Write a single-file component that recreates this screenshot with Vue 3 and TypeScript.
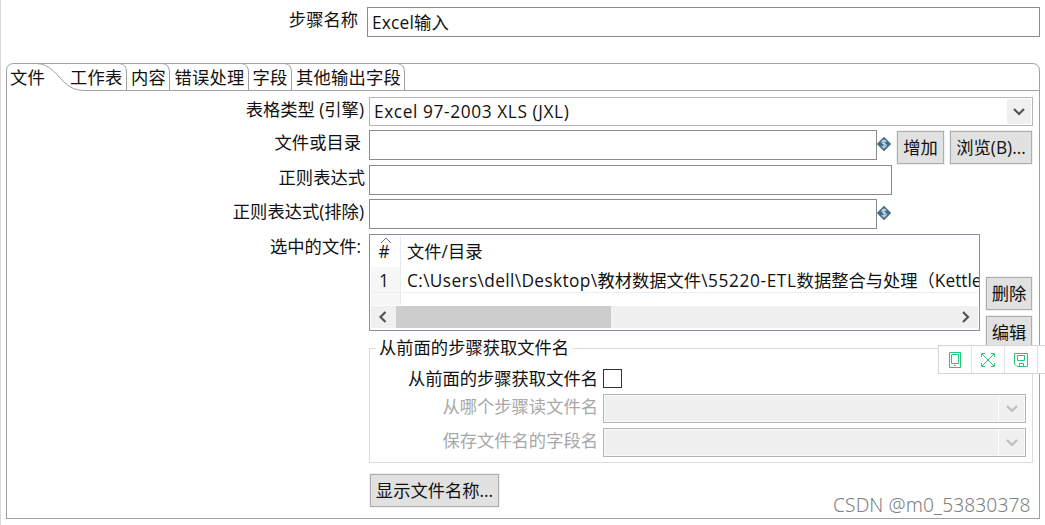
<template>
  <div class="dialog">
    <div class="name-row">
      <label class="name-label">步骤名称</label>
      <div class="input name-input">Excel输入</div>
    </div>

    <div class="folder">
      <div class="tabs">
        <svg class="tab-lines" width="1034" height="29" viewBox="0 0 1034 29" fill="none" stroke="#a0a0a0">
          <path d="M.5 29V8Q.5 .5 8 .5H1026Q1033.5 .5 1033.5 8V29" />
          <path d="M30 .5C45 .5 51 13 59 20Q67 27.500 78 27.500H1033" />
          <path v-for="x in tabEdges" :key="x" :d="`M${x - 7} .5Q${x} 1.500 ${x} 9V27.500`" />
        </svg>
        <span v-for="tab in tabs" :key="tab.text" class="tab" :style="{ width: tab.width + 'px' }">{{ tab.text }}</span>
      </div>

      <div class="body">
        <div class="row engine">
          <label class="label">表格类型 (引擎)</label>
          <div class="combo">
            <span class="latin">Excel 97-2003 XLS (JXL)</span>
            <span class="arrow">
              <svg width="14" height="10" viewBox="0 0 14 10"><path d="M2 2L7 7L12 2" /></svg>
            </span>
          </div>
        </div>

        <div class="row file">
          <label class="label inset">文件或目录</label>
          <div class="input short"></div>
          <svg class="variable" width="16" height="16" viewBox="0 0 16 16">
            <path d="M8 .7L15.200 8L8 15.300L.8 8Z" fill="#426b8a" />
            <path d="M10.300 5.500Q8 3.900 6.300 5.200Q5.200 7.100 8 7.700Q11 8.300 9.900 10.300Q8.200 12 5.700 10.500M8 3.500V12.500" fill="none" stroke="#d3e0e9" stroke-width="1.200" />
          </svg>
          <button class="btn add">增加</button>
          <button class="btn browse">浏览(B)...</button>
        </div>

        <div class="row regex">
          <label class="label flush">正则表达式</label>
          <div class="input long"></div>
        </div>

        <div class="row exclude">
          <label class="label">正则表达式(排除)</label>
          <div class="input short"></div>
          <svg class="variable" width="16" height="16" viewBox="0 0 16 16">
            <path d="M8 .7L15.200 8L8 15.300L.8 8Z" fill="#426b8a" />
            <path d="M10.300 5.500Q8 3.900 6.300 5.200Q5.200 7.100 8 7.700Q11 8.300 9.900 10.300Q8.200 12 5.700 10.500M8 3.500V12.500" fill="none" stroke="#d3e0e9" stroke-width="1.200" />
          </svg>
        </div>

        <div class="row files">
          <label class="label inset">选中的文件:</label>
          <div class="table">
            <div class="table-head">
              <span class="num">
                <svg class="sort" width="12" height="7" viewBox="0 0 12 7"><path d="M1 6L6 1L11 6" /></svg>
                #
              </span>
              <span class="cell">文件/目录</span>
            </div>
            <div class="table-row">
              <span class="num">1</span>
              <span class="cell"><span class="path-start">C:\Users\dell\Desktop\</span>教材数据文件<span class="path-code">\55220-ETL</span>数据整合与处理（Kettle</span>
            </div>
            <div class="table-row empty"><span class="num"></span></div>
            <div class="scrollbar">
              <svg width="25" height="22" viewBox="0 0 25 22"><path d="M14.500 6L9.500 11L14.500 16" /></svg>
              <div class="thumb"></div>
              <svg class="right" width="25" height="22" viewBox="0 0 25 22"><path d="M10 6L15 11L10 16" /></svg>
            </div>
          </div>
          <div class="side">
            <button class="btn">删除</button>
            <button class="btn">编辑</button>
          </div>
        </div>

        <fieldset class="group">
          <legend>从前面的步骤获取文件名</legend>
          <div class="group-row accept">
            <label>从前面的步骤获取文件名</label>
            <span class="checkbox"></span>
          </div>
          <div v-for="text in disabledFields" :key="text" class="group-row disabled">
            <label>{{ text }}</label>
            <div class="combo">
              <span class="arrow">
                <svg width="14" height="10" viewBox="0 0 14 10"><path d="M2 2L7 7L12 2" /></svg>
              </span>
            </div>
          </div>
        </fieldset>

        <button class="btn show">显示文件名称...</button>
      </div>
    </div>

    <div class="toolbar">
      <span class="tool">
        <svg width="16" height="16" viewBox="0 0 16 16"><path d="M2.500 .5H13.500V15.500H2.500ZM4.500 2.500H11.500V11.500H4.500ZM7 13.500H9" /></svg>
      </span>
      <span class="tool">
        <svg width="16" height="16" viewBox="0 0 16 16"><path d="M2 2L14 14M14 2L2 14M1.500 5V1.500H5M11 1.500H14.500V5M1.500 11V14.500H5M11 14.500H14.500V11" /></svg>
      </span>
      <span class="tool">
        <svg width="16" height="16" viewBox="0 0 16 16"><path d="M1.500 1.500H14.500V14.500H4L1.500 12ZM4.500 3.500H11.500V8.500H4.500ZM6.500 14.500V11.500H10.500V14.500" /></svg>
      </span>
    </div>
    <div class="watermark">CSDN @m0_53830378</div>
  </div>
</template>

<script setup lang="ts">
interface Tab {
  text: string
  width: number
}

const tabs: Tab[] = [
  { text: '文件', width: 60 },
  { text: '工作表', width: 61 },
  { text: '内容', width: 43.5 },
  { text: '错误处理', width: 78 },
  { text: '字段', width: 43.5 },
  { text: '其他输出字段', width: 110 },
]

const tabEdges = [120.5, 163.5, 242.5, 285.5, 398.5]

const disabledFields = ['从哪个步骤读文件名', '保存文件名的字段名']
</script>

<style scoped>
.dialog {
  position: relative;
  width: 1045px;
  height: 525px;
  overflow: hidden;
  padding: 7px 5px 0 5px;
  border-left: 1px solid #ded8d5;
  background: #fff;
  color: #111;
  font-family: "Open Sans", "Noto Sans CJK SC", sans-serif;
  font-size: 17.3px;
  line-height: 24px;
  white-space: nowrap;
}

.dialog,
.dialog * {
  box-sizing: border-box;
}

.name-row {
  display: flex;
  height: 30px;
}

.name-label {
  width: 361px;
  padding: 1px 9px 0 0;
  text-align: right;
}

.input {
  height: 30px;
  border: 1px solid #8b8b8b;
  background: #fff;
}

.name-input {
  width: 673px;
  padding: 3px 4px;
  letter-spacing: 0.2px;
}

.folder {
  width: 1034px;
  height: 456px;
  margin-top: 26px;
}

.tabs {
  position: relative;
  display: flex;
  height: 28px;
  padding: 3px 0 0 4px;
  letter-spacing: 0.2px;
}

.tab-lines {
  position: absolute;
  left: 0;
  top: 0;
}

.tab {
  position: relative;
}

.body {
  height: 428px;
  padding-top: 6px;
  border: 1px solid #a0a0a0;
  border-top: 0;
}

.row {
  display: flex;
  height: 30px;
}

.label {
  flex: none;
  width: 362px;
  padding: 1px 5px 0 0;
  text-align: right;
}

.label.inset {
  padding-right: 8px;
}

.label.flush {
  padding-right: 4px;
}

.combo {
  display: flex;
  align-items: center;
  justify-content: space-between;
  width: 664px;
  height: 29px;
  padding: 1px 1px 1px 4px;
  border: 1px solid #b4b4bb;
}

.latin {
  letter-spacing: 0.6px;
}

.arrow {
  display: flex;
  align-items: center;
  justify-content: center;
  width: 24px;
  height: 25px;
  margin-left: auto;
  background: #f0f0f0;
}

.arrow path,
.scrollbar path {
  fill: none;
  stroke: #555;
  stroke-width: 2.2;
}

.file {
  margin-top: 3px;
}

.short {
  width: 508px;
}

.long {
  width: 523px;
}

.variable {
  flex: none;
  margin: 6px 0 0 -1px;
}

.btn {
  flex: none;
  height: 33px;
  padding: 1px 0 0;
  border: 1px solid #adadad;
  outline: 1px solid #f0f0f0;
  background: #e1e1e1;
  color: #111;
  font: inherit;
}

.add {
  width: 47px;
  margin: 1px 0 0 5px;
}

.browse {
  width: 82px;
  margin: 1px 0 0 6px;
}

.regex {
  margin-top: 5px;
}

.exclude {
  margin-top: 4px;
}

.files {
  height: 97px;
  margin-top: 5px;
}

.table {
  width: 611px;
  height: 97px;
  padding: 1px;
  overflow: hidden;
  border: 1px solid #8a8e98;
}

.table-head,
.table-row {
  display: flex;
}

.table-head {
  height: 31px;
}

.num {
  position: relative;
  flex: none;
  width: 30px;
  padding: 4px 3px 0 0;
  border-right: 1px solid #e5ebf0;
  text-align: center;
}

.sort {
  position: absolute;
  left: 9px;
  top: 1px;
  fill: none;
  stroke: #777;
}

.cell {
  padding: 4px 0 0 6px;
}

.path-start {
  letter-spacing: 0.37px;
}

.path-code {
  letter-spacing: 0.6px;
}

.table-row {
  height: 26px;
  border-bottom: 1px solid #eceef0;
}

.table-row .num {
  padding-top: 2px;
  background: #f7f7f7;
}

.table-row .cell {
  padding-top: 2px;
}

.table-row.empty {
  height: 12px;
  border: 0;
}

.scrollbar {
  display: flex;
  height: 22px;
  margin-top: 1px;
  background: #f0f0f0;
}

.thumb {
  width: 215px;
  height: 22px;
  background: #cdcdcd;
}

.right {
  margin-left: auto;
}

.side {
  display: flex;
  flex-direction: column;
  gap: 6px;
  margin: 43px 0 0 6px;
}

.side .btn {
  width: 46px;
}

.group {
  width: 664px;
  height: 127px;
  margin: 5px 0 0 362px;
  padding: 9px 0 0;
  border: 1px solid #dcdcdc;
}

.group legend {
  margin-left: 6px;
  padding: 0 3px;
}

.group-row {
  display: flex;
  height: 29px;
}

.group-row label {
  width: 228px;
  text-align: right;
}

.checkbox {
  width: 19px;
  height: 19px;
  margin: 0 0 0 5px;
  border: 1px solid #333;
}

.group-row.accept {
  height: 25px;
}

.accept label {
  margin-top: -2px;
}

.disabled {
  margin-bottom: 5px;
  color: #a8a8a8;
}

.disabled label {
  padding-top: 1px;
}

.disabled .combo {
  width: 423px;
  margin-left: 5px;
  background: #f0f0f0;
  box-shadow: inset 0 0 0 1px #fafafa;
}

.disabled .arrow {
  width: 26px;
  border-left: 1px solid #fff;
}

.disabled .arrow path {
  stroke: #bdbdbd;
}

.show {
  display: block;
  width: 129px;
  margin: 11px 0 0 363px;
}

.toolbar {
  position: absolute;
  left: 937px;
  top: 345px;
  display: flex;
  width: 108px;
  height: 29px;
  border: 1px solid #d5d5d5;
  border-right: 0;
  background: #fff;
}

.tool {
  display: flex;
  align-items: center;
  justify-content: center;
  width: 33px;
  border-right: 1px solid #e2e2e2;
}

.tool path {
  fill: none;
  stroke: #27c47c;
}

.watermark {
  position: absolute;
  left: 832px;
  top: 493px;
  color: #808080;
  font-family: "Noto Sans", sans-serif;
  font-size: 19.2px;
  font-weight: 300;
  letter-spacing: 0.1px;
}
</style>

<style>
body {
  margin: 0;
  background: #fff;
}
</style>
